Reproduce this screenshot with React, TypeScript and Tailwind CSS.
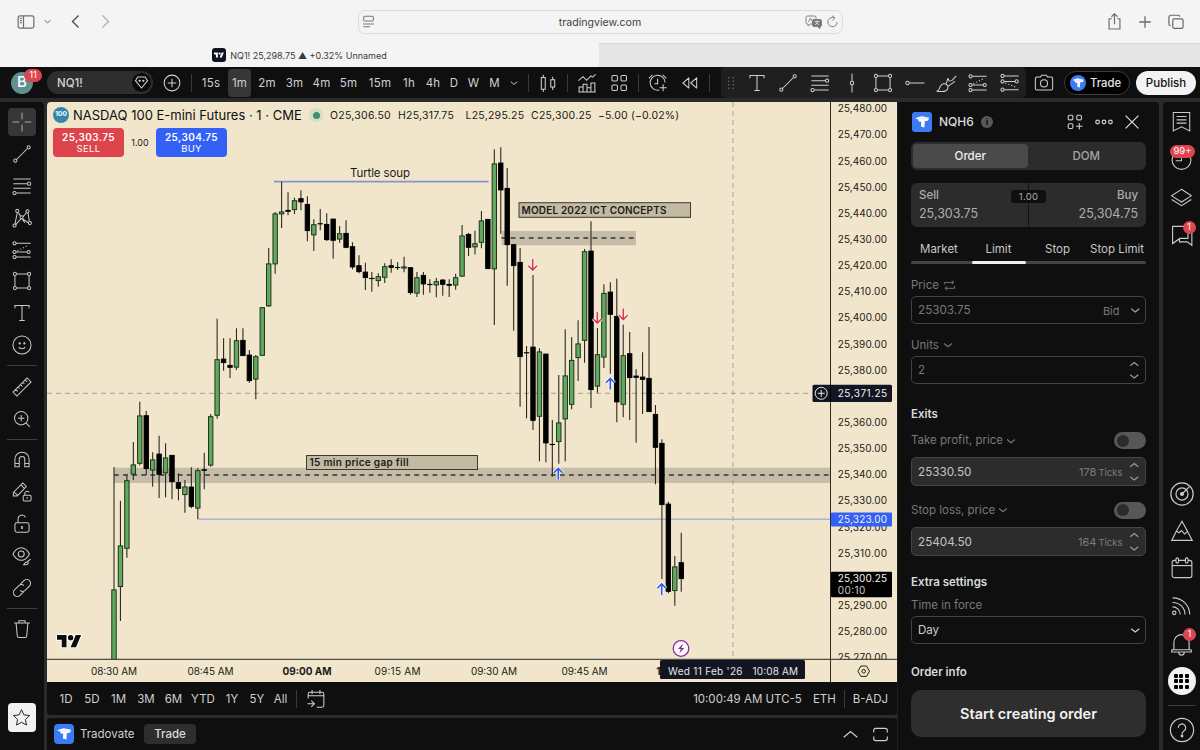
import type { ReactNode } from 'react';
import clsx from 'clsx';

interface IconProps {
  size?: number;
  sw?: number;
  className?: string;
  children: ReactNode;
}

// every glyph is drawn on a 28 unit grid
function Icon({ size = 22, sw = 1.3, className, children }: IconProps) {
  return (
    <svg
      width={size}
      height={size}
      viewBox="0 0 28 28"
      fill="none"
      stroke="currentColor"
      strokeWidth={sw}
      className={clsx('shrink-0', className)}
    >
      {children}
    </svg>
  );
}

const TrendLine = () => (
  <Icon>
    <circle cx="5.5" cy="22.5" r="2" />
    <circle cx="22.5" cy="5.5" r="2" />
    <path d="M7 21 21 7" />
  </Icon>
);

const FibLines = () => (
  <Icon>
    <path d="M3 5h22M3 11h17.5M3 17h22M7 23h18" />
    <circle cx="23" cy="11" r="2.1" />
    <circle cx="4.5" cy="23" r="2.1" />
  </Icon>
);

const RectShape = () => (
  <Icon>
    <path d="M7.5 5h13M7.5 23h13M5 7.5v13M23 7.5v13" />
    <circle cx="5" cy="5" r="2" />
    <circle cx="23" cy="5" r="2" />
    <circle cx="5" cy="23" r="2" />
    <circle cx="23" cy="23" r="2" />
  </Icon>
);

const LongPosition = () => (
  <Icon>
    <path d="M6.5 5.5H25M6.5 16.5H20.5M6.5 23H25" />
    <path d="M8 15 22 8" strokeDasharray="1.5 2.5" />
    <circle cx="4.5" cy="5.5" r="2" />
    <circle cx="4.5" cy="16.5" r="2" />
    <circle cx="22.5" cy="16.5" r="2" />
    <circle cx="4.5" cy="23" r="2" />
  </Icon>
);

const ShortPosition = () => (
  <Icon>
    <path d="M6.5 5H25M6.5 12H20.5M6.5 22.5H25" />
    <path d="M8 14 23 20" strokeDasharray="1.5 2.5" />
    <circle cx="4.5" cy="5" r="2" />
    <circle cx="4.5" cy="12" r="2" />
    <circle cx="22.5" cy="12" r="2" />
    <circle cx="4.5" cy="22.5" r="2" />
  </Icon>
);

const TextTool = () => (
  <Icon>
    <path d="M5 8V4.5h18V8M14 4.5V23.5M10.5 23.5h7" />
  </Icon>
);

const ZoomIn = () => (
  <Icon>
    <circle cx="13" cy="13" r="8.5" />
    <path d="M19 19l5 5M13 9v8M9 13h8" />
  </Icon>
);

const Chevron = ({ size = 14, className }: { size?: number; className?: string }) => (
  <Icon size={size} sw={2.6} className={className}>
    <path d="M5 10.5l9 7.5 9-7.5" />
  </Icon>
);

// text that sits a pixel below the centre line of its row
const Txt = ({ className, children }: { className?: string; children: ReactNode }) => (
  <span className={clsx('pt-[2px]', className)}>{children}</span>
);

const Tradovate = ({ className }: { className?: string }) => (
  <span className={clsx('flex items-center justify-center bg-[#3d7bf4] shrink-0', className)}>
    <svg viewBox="0 0 20 20" className="w-full h-full" fill="#fff">
      <path d="M3 6.2 9.5 4.2 17 5.8 16.2 8.6 12.8 9.2 12.4 15.6 9 14.6 9.2 9.8 6.8 9.6 6 7.6Z" />
      <path d="M6 7.6 10 6.2 12.8 9.2M10 6.2 16.6 7.2" stroke="#a9c6fb" strokeWidth=".4" fill="none" />
    </svg>
  </span>
);

function BrowserChrome() {
  return (
    <header className="h-[67px] bg-[#f4f4f4] text-[#4c4c4c] flex flex-col shrink-0">
      <div className="h-[43px] flex items-center">
        <div className="w-[358px] flex items-center pl-[16px]">
          <Icon size={20} sw={1.7} className="text-[#6e6e6e]">
            <rect x="3" y="5.5" width="22" height="17" rx="2.5" />
            <path d="M10.5 5.5v17M5.5 9h2.5M5.5 12h2.5M5.5 15h2.5" />
          </Icon>
          <Chevron size={9} className="ml-[7px]" />
          <Icon size={17} sw={2.2} className="ml-[15px]">
            <path d="M19 4 9 14l10 10" />
          </Icon>
          <Icon size={17} sw={2} className="ml-[13px] text-[#a8a8a8]">
            <path d="M9 4l10 10L9 24" />
          </Icon>
        </div>
        <div className="w-[485px] h-[24px] rounded-[7px] border border-[#dcdcdc] flex items-center justify-between pl-[2px] pr-[3px]">
          <div className="w-[60px] flex">
            <Icon size={15} sw={1.9} className="text-[#777]">
              <rect x="5" y="4" width="18" height="9" rx="2" />
              <path d="M4 18.5h20M4 24h13" />
            </Icon>
          </div>
          <Txt className="text-[10.6px] text-[#3f3f3f]">tradingview.com</Txt>
          <div className="w-[60px] flex items-center justify-end gap-[3px]">
            <svg width="18" height="14" viewBox="0 0 18 14" fill="none" stroke="#777" strokeWidth=".9">
              <path d="M2.5 1h7a1.5 1.5 0 0 1 1.5 1.5V4M7 9H5.5L3 11V9h-.5A1.5 1.5 0 0 1 1 7.500v-5A1.5 1.5 0 0 1 2.5 1" />
              <path d="M3.5 7 5.5 3 7 6" />
              <path d="M9 4.5h6a1.5 1.5 0 0 1 1.5 1.5v4a1.5 1.5 0 0 1-1.5 1.5v2l-2.5-2H9A1.5 1.5 0 0 1 7.500 10V6A1.5 1.5 0 0 1 9 4.5Z" fill="#777" />
              <path d="M9.5 6.5h5M12 5.5v1M10 10l3.5-3M14 10l-3.5-3" stroke="#f4f4f4" strokeWidth=".7" />
            </svg>
            <Icon size={13} sw={2} className="text-[#777]">
              <path d="M19 6.5A10 10 0 1 0 24 15M13 1.5l6 5-5 5.5" />
            </Icon>
          </div>
        </div>
        <div className="flex-1 flex items-center justify-end gap-[12px] pr-[15px] text-[#6a6a6a]">
          <Icon size={19} sw={1.7}>
            <path d="M10 10H6v15h16V10h-4M14 18V3M9.5 7 14 2.5 18.5 7" />
          </Icon>
          <Icon size={18} sw={2}>
            <path d="M14 5v18M5 14h18" />
          </Icon>
          <Icon size={18} sw={1.9} className="ml-px">
            <rect x="9" y="9" width="16" height="15" rx="2.5" />
            <path d="M5.5 19.5A2.5 2.5 0 0 1 3 17V6.5A3 3 0 0 1 6 3.5h11.5A2.5 2.5 0 0 1 20 6" />
          </Icon>
        </div>
      </div>
      <div className="h-[24px] flex">
        <div className="w-[599px] flex items-center justify-center gap-[4px]">
          <span className="w-[14px] h-[14px] rounded-[3px] bg-[#10131f] flex items-center justify-center">
            <svg width="10" height="6" viewBox="0 4 36 18" fill="#fff">
              <path d="M14 22H7V11H0V4h14zM28 22h-8l7.5-18h8z" />
              <circle cx="20" cy="8" r="4" />
            </svg>
          </span>
          <Txt className="text-[9px] text-[#3a3a3a] whitespace-nowrap">NQ1! 25,298.75 ▲ +0.32% Unnamed</Txt>
        </div>
        <div className="flex-1 bg-[#e6e6e6] border-t border-[#d6d6d6]" />
      </div>
    </header>
  );
}

const intervals = [
  { label: '15s', cls: 'w-[30px]' },
  { label: '1m', cls: 'w-[27px]', active: true },
  { label: '2m', cls: 'w-[28px]' },
  { label: '3m', cls: 'w-[27px]' },
  { label: '4m', cls: 'w-[27px]' },
  { label: '5m', cls: 'w-[27px]' },
  { label: '15m', cls: 'w-[36px]' },
  { label: '1h', cls: 'w-[22px]' },
  { label: '4h', cls: 'w-[26px]' },
  { label: 'D', cls: 'w-[16px]' },
  { label: 'W', cls: 'w-[23px]' },
  { label: 'M', cls: 'w-[19px]' },
];

function Slot({ className, children }: { className: string; children?: ReactNode }) {
  return <div className={clsx('h-full flex items-center justify-center shrink-0', className)}>{children}</div>;
}

const VSep = () => <span className="w-px h-[18px] bg-[#3a3a3a]" />;

function FavoriteTools() {
  const tools = [
    <TextTool />,
    <TrendLine />,
    <FibLines />,
    <Icon>
      <path d="M14 2v9.5M14 16v10" />
      <circle cx="14" cy="14" r="2.2" />
    </Icon>,
    <RectShape />,
    <Icon>
      <circle cx="4.5" cy="14" r="2.2" />
      <path d="M7 14h19" />
    </Icon>,
    <Icon>
      <path d="M2 24.5c3.500-.5 3.500-3.500 4.800-6.300 1.800-3.700 6-4.200 8.200-2s2 5.500-.5 7.300c-2.500 1.700-8.500 1.500-12.500 1zM14 15.500l2.500-7.500M17 18l8.500-6M16.500 8l1.500 3.500 3.500-.5 5.500-6" />
    </Icon>,
    <LongPosition />,
    <ShortPosition />,
  ];
  return (
    <div className="h-[31px] w-[305px] ml-[9px] bg-[#1f1f1f] rounded-[5px] flex shrink-0 text-[#d0d0d0]">
      <Slot className="w-[20px] text-[#6f6f6f]">
        <Icon size={16} sw={0}>
          {[5, 11, 17, 23].map((y) => (
            <g key={y} fill="currentColor">
              <circle cx="10" cy={y} r="1.3" />
              <circle cx="18" cy={y} r="1.3" />
            </g>
          ))}
        </Icon>
      </Slot>
      {tools.map((t, i) => (
        <Slot key={i} className="w-[31.6px]">
          {t}
        </Slot>
      ))}
    </div>
  );
}

function Toolbar() {
  return (
    <div className="h-[31px] bg-[#0f0f0f] flex items-center shrink-0 text-[#d1d1d1] text-[11.5px]">
      <div className="w-[47px] pl-[11px] relative">
        <span className="w-[22px] h-[22px] rounded-full bg-[#5f9191] text-white text-[15px] font-medium flex items-center justify-center">
          B
        </span>
        <span className="absolute left-[24px] -top-[3px] w-[18px] h-[13px] rounded-full bg-[#dd4550] text-white text-[9.5px] flex items-center justify-center">
          11
        </span>
      </div>
      <div className="w-[106px] h-[23px] rounded-full bg-[#2e2e2e] flex items-center justify-between pl-[10px] pr-[2px] font-medium">
        <Txt>NQ1!</Txt>
        <span className="w-[19px] h-[19px] rounded-full bg-[#0a0a0a] flex items-center justify-center">
          <Icon size={17} sw={1.7}>
            <path d="M8 5h12l4 6-10 12L4 11zM11 9.5V13M9 11h4M17 9.5V13M15 11h4" />
          </Icon>
        </span>
      </div>
      <Slot className="w-[38px]">
        <Icon size={20} sw={1.5}>
          <circle cx="14" cy="14" r="11" />
          <path d="M14 8v12M8 14h12" />
        </Icon>
      </Slot>
      <Slot className="w-[5px] justify-start">
        <VSep />
      </Slot>
      {intervals.map((it) => (
        <Slot key={it.label} className={it.cls}>
          <span
            className={clsx(
              'h-[28px] pt-[2px] flex items-center justify-center tracking-[0.2px]',
              it.active && 'w-[23px] bg-[#373737] rounded-[4px]',
            )}
          >
            {it.label}
          </span>
        </Slot>
      ))}
      <Slot className="w-[20px]">
        <Chevron size={10} />
      </Slot>
      <Slot className="w-[9px]">
        <VSep />
      </Slot>
      <Slot className="w-[29px]">
        <Icon>
          <path d="M5.5 7h5v15h-5zM8 3.5V7M8 22v3.5M17.5 10h5v9h-5zM20 6v4M20 19v4" />
        </Icon>
      </Slot>
      <Slot className="w-[10px]">
        <VSep />
      </Slot>
      <Slot className="w-[30px]">
        <Icon>
          <path d="M4 25v-6h5v6M9 19v-3.5h5V25M14 20h5v5M19 20v-6h5v11M3 25.5h22M3 11l6-5 4.5 4.5L19 5l2 1.5L25 3" />
        </Icon>
      </Slot>
      <Slot className="w-[33px]">
        <Icon>
          <rect x="5" y="4.5" width="7" height="7" rx="1.5" />
          <rect x="16.5" y="4.5" width="7" height="7" rx="1.5" />
          <rect x="5" y="16.5" width="7" height="7" rx="1.5" />
          <rect x="16.5" y="16.5" width="7" height="7" rx="1.5" />
        </Icon>
      </Slot>
      <Slot className="w-[6px]">
        <VSep />
      </Slot>
      <Slot className="w-[33px]">
        <Icon>
          <path d="M23 13.5a9.500 9.500 0 1 0-7.500 9.500M13.500 8.500V15H9.500M2.500 8 7 3.500M24.500 8 20 3.500M20.500 15.500v9M16 20h9" />
        </Icon>
      </Slot>
      <Slot className="w-[32px]">
        <Icon>
          <path d="M12.5 7.5v13L5 14zM22.5 7.5v13L15 14z" strokeLinejoin="round" />
        </Icon>
      </Slot>
      <Slot className="w-[6px]">
        <VSep />
      </Slot>
      <FavoriteTools />
      <Slot className="w-[36px]">
        <Icon>
          <path d="M9.500 6.500l1.500-2.500h6l1.500 2.500H23a2 2 0 0 1 2 2v12.500a2 2 0 0 1-2 2H5a2 2 0 0 1-2-2V8.500a2 2 0 0 1 2-2z" />
          <circle cx="14" cy="14.5" r="4.5" />
        </Icon>
      </Slot>
      <button className="ml-[2px] w-[66px] h-[24px] rounded-full border border-[#3b3b3b] bg-black flex items-center pl-[5px] gap-[4px] text-[11.3px] font-medium text-[#e4e4e4]">
        <Tradovate className="w-[16px] h-[16px] rounded-full" />
        <Txt>Trade</Txt>
      </button>
      <button className="ml-[6px] w-[60px] h-[24px] pt-[2px] rounded-full bg-[#f2f2f2] text-[#111] text-[11.5px] font-medium flex items-center justify-center">
        Publish
      </button>
    </div>
  );
}

function DrawingBar() {
  const groups = [
    [
      <span className="w-[28px] h-[28px] rounded-[4px] bg-[#373737] flex items-center justify-center">
        <Icon className="text-[#aaa]">
          <path d="M14 2v8.5M14 17.5V26M2 14h8.5M17.5 14H26" />
        </Icon>
      </span>,
      <TrendLine />,
      <FibLines />,
      <Icon>
        <path d="M5 22 8 7M9.5 7.5l8 12.5M6 22.5 20 7M21.5 7l2 12M13 14l9 6" />
        <circle cx="4.5" cy="23.5" r="2" fill="#0f0f0f" />
        <circle cx="8" cy="5" r="2" fill="#0f0f0f" />
        <circle cx="13.5" cy="13" r="2" fill="#0f0f0f" />
        <circle cx="21" cy="5.5" r="2" fill="#0f0f0f" />
        <circle cx="24" cy="20.5" r="2" fill="#0f0f0f" />
      </Icon>,
      <LongPosition />,
      <RectShape />,
      <TextTool />,
      <Icon>
        <circle cx="14" cy="14" r="11.5" />
        <path d="M10 16.5c1 3 7 3 8 0" />
        <circle cx="11" cy="12" r=".8" fill="currentColor" />
        <circle cx="17" cy="12" r=".8" fill="currentColor" />
      </Icon>,
    ],
    [
      <Icon>
        <path d="M2.5 20.5 20.5 2.5l5 5-18 18zM6 17l2.5 2.5M9 14l2 2M12 11l2.5 2.5M15 8l2 2M18 5l2.5 2.5" />
      </Icon>,
      <ZoomIn />,
    ],
    [
      <Icon>
        <path d="M5 22.5V13a9 9 0 0 1 18 0v9.5h-5.5V13a3.5 3.5 0 0 0-7 0v9.5zM5 18.5h5.5M17.5 18.5H23" />
      </Icon>,
      <Icon>
        <path d="M3 19v-4.5L15 2.5l4.5 4.5L8 19zM12.5 5l4.5 4.5M4 14l4 4" />
        <rect x="15.5" y="18" width="10" height="7.5" rx="1.5" />
        <path d="M17.5 18v-2a3 3 0 0 1 5.5-1.5M20.5 20.5v2" />
      </Icon>,
      <Icon>
        <rect x="5" y="12.5" width="18" height="12" rx="2.5" />
        <path d="M9 12.5V8a5 5 0 0 1 9.5-2.5" />
        <path d="M14 16.5v4" strokeWidth="2" />
      </Icon>,
      <Icon>
        <path d="M2.5 11.5C5 6.5 9 3.5 13 3.5s8 3 10.5 8c-2.5 5-6.5 8-10.5 8s-8-3-10.5-8z" />
        <circle cx="13" cy="11.5" r="3.8" />
        <path d="M15.5 25c2 .2 1.5-3 4.5-3.5s2.5 3.5-1 3.5zM21 21l4-3" />
      </Icon>,
      <Icon>
        <path d="M12 9l4.5-4.5a4.800 4.800 0 0 1 7 7L18 17a4.800 4.800 0 0 1-6.5 0M16 19l-4.5 4.5a4.800 4.800 0 0 1-7-7L10 11a4.800 4.800 0 0 1 6.5 0" />
      </Icon>,
    ],
    [
      <Icon>
        <path d="M4 6.5h20M10 6.5v-3h8v3M6.5 6.5 8 23a2 2 0 0 0 2 1.8h8a2 2 0 0 0 2-1.8l1.5-16.5" />
      </Icon>,
    ],
  ];

  return (
    <aside className="w-[43.5px] bg-[#0f0f0f] rounded-tr-[4px] pt-[4.6px] flex flex-col items-center shrink-0 text-[#c9c9c9]">
      {groups.map((g, i) => (
        <div key={i} className="flex flex-col items-center">
          {i > 0 && (
            <div className="h-[10px] flex items-center">
              <span className="w-[30px] h-px bg-[#3d3d3d]" />
            </div>
          )}
          {g.map((icon, j) => (
            <div key={j} className="h-[31.8px] flex items-center">
              {icon}
            </div>
          ))}
        </div>
      ))}
      <button className="mt-auto mb-[18px] w-[28px] h-[29px] rounded-[4px] bg-[#f2f2f2] text-[#222] flex items-center justify-center">
        <Icon size={21}>
          <path d="M14 3.5l3.2 7 7.6.9-5.6 5.2 1.5 7.5L14 20.4l-6.700 3.7 1.5-7.5L3.2 11.4l7.6-.9z" />
        </Icon>
      </button>
    </aside>
  );
}

// [high, body top, body bottom, low, bullish]
type Candle = [number, number, number, number, 0 | 1];

const candles: Candle[] = [
  [467, 589.5, 662, 662, 1],
  [500.7, 545.5, 587, 621, 1],
  [475, 480.3, 548.7, 557.7, 1],
  [442, 464.5, 474.5, 480, 1],
  [401.7, 415.5, 463.7, 465.3, 1],
  [411, 415.3, 469, 475, 0],
  [452.3, 459.5, 470.5, 486.7, 1],
  [435.7, 453.7, 474.7, 498, 0],
  [443.3, 457.5, 473.3, 497.3, 1],
  [455, 455, 482, 499.3, 0],
  [473.3, 482.3, 488.7, 500.3, 0],
  [480, 486.5, 495, 512.7, 1],
  [467.3, 486.7, 506.7, 508.3, 0],
  [468.3, 470.3, 508.5, 519, 1],
  [452.7, 469.3, 470.7, 489.3, 0],
  [414, 416.3, 465.5, 466.7, 1],
  [318.7, 359.3, 415.7, 418.7, 1],
  [338.3, 358.7, 363, 370.7, 0],
  [338.3, 365, 367.7, 378, 0],
  [328.3, 340.3, 367.5, 370, 1],
  [328.3, 340, 356, 356, 0],
  [350, 354.7, 381, 382.7, 0],
  [355, 356.3, 379.5, 399.3, 1],
  [307, 307.3, 355.7, 355.7, 1],
  [248, 263.5, 306.3, 307, 1],
  [212, 213.5, 264.3, 273.7, 1],
  [181.7, 211.5, 214.3, 228, 1],
  [192.3, 210, 211.7, 215.3, 0],
  [197.7, 200.3, 210, 214, 1],
  [190.3, 198.3, 202.3, 210.3, 0],
  [196.3, 204, 231, 241.3, 0],
  [219.3, 224.3, 235.3, 251, 1],
  [209, 223.3, 224, 230.3, 0],
  [213.3, 224, 240, 241, 0],
  [218.7, 218.7, 240.7, 258.7, 0],
  [226, 233.3, 239.5, 242.7, 1],
  [220.3, 233, 247.7, 248.3, 0],
  [242.3, 246.3, 267.3, 269.3, 0],
  [255.3, 265.3, 272, 273.3, 0],
  [262.7, 271.7, 278, 290, 0],
  [272, 278, 278.7, 291.7, 0],
  [273.3, 276.3, 281, 286.7, 1],
  [263.3, 266.3, 277.7, 283, 1],
  [259.3, 265.3, 267.7, 272.7, 0],
  [262, 267, 267.7, 270, 0],
  [256.7, 266.5, 268.5, 272.3, 1],
  [267.3, 267.3, 293, 294.7, 0],
  [272, 277.3, 293.5, 297, 1],
  [272, 275, 284.3, 294.7, 0],
  [279.3, 284, 284.7, 292.7, 0],
  [278, 281.3, 285.3, 297.3, 1],
  [279, 279.7, 284.7, 295.7, 0],
  [279.3, 284, 285.7, 297, 0],
  [273.7, 277.3, 285.5, 289.7, 1],
  [225, 235.5, 276.5, 277, 1],
  [233, 234, 247.7, 256, 0],
  [230.7, 243.3, 247.3, 254.5, 1],
  [211, 220.5, 242.7, 248.3, 1],
  [219, 219, 269, 269, 0],
  [149.3, 163.5, 269.3, 325, 1],
  [147.3, 162.7, 190.3, 233.7, 0],
  [168, 188, 245, 285.7, 0],
  [244.3, 244.3, 266, 330.7, 0],
  [248, 262, 357, 406.7, 0],
  [346, 352.3, 353, 418.3, 0],
  [275, 346.7, 420.7, 430, 0],
  [348.3, 351.5, 416.7, 461.3, 1],
  [353.7, 353.7, 443.3, 462.3, 0],
  [420, 444, 444.7, 476.7, 0],
  [375, 422.5, 442, 463.7, 1],
  [329.3, 375.5, 419.3, 461.3, 1],
  [337, 360, 404.7, 409.3, 1],
  [320.3, 343.5, 358, 381, 1],
  [249, 251.3, 340.7, 362.7, 1],
  [221.3, 250.7, 390, 408, 0],
  [328, 354.3, 386.5, 392.7, 1],
  [284.3, 293, 357.5, 368, 1],
  [282.3, 291.7, 314.7, 373.7, 0],
  [278.7, 316, 402.3, 422.3, 0],
  [324.7, 355.3, 404.7, 417.3, 1],
  [332, 353.3, 378, 420, 0],
  [369.3, 375.7, 377.7, 442.7, 0],
  [352.3, 376.7, 379.7, 414, 0],
  [327, 378, 412, 412, 0],
  [405, 414, 447.7, 484.3, 0],
  [439.3, 443, 505, 579, 0],
  [501.7, 503.7, 591.7, 593.3, 0],
  [556, 566.5, 591, 605.7, 1],
  [532.7, 562.3, 579, 591.7, 0],
];

const FIRST_X = 114;
const STEP = 6.446;

const priceToY = (p: number) => 108.3 + (25480 - p) * 2.615;

const prices = Array.from({ length: 22 }, (_, i) => 25480 - i * 10).filter((p) => p !== 25370 && p !== 25300);

const timeLabels: [string, number, boolean][] = [
  ['08:30 AM', 114, false],
  ['08:45 AM', 210.5, false],
  ['09:00 AM', 307, true],
  ['09:15 AM', 397.5, false],
  ['09:30 AM', 494, false],
  ['09:45 AM', 584.5, false],
];

function Arrow({ x, y, up }: { x: number; y: number; up?: boolean }) {
  const d = up ? 'M0 6V-5M-4.3-.7 0-5 4.3-.7' : 'M0-6V5M-4.3 .7 0 5 4.3 .7';
  return (
    <g transform={`translate(${x} ${y})`} fill="none">
      <path d={d} stroke="#fff" strokeWidth="3.4" opacity=".8" />
      <path d={d} stroke={up ? '#2f5be6' : '#d63a50'} strokeWidth="1.6" />
    </g>
  );
}

function PriceChart() {
  return (
    <svg width="850" height="580" viewBox="47 102 850 580" className="block" fontSize="10" fill="#1c1a17">
      <rect x="47" y="102" width="850" height="580" fill="#f1e6cc" />

      {/* zones */}
      <rect x="114" y="467.7" width="716" height="15.3" fill="#c6bda8" />
      <rect x="501.5" y="231" width="134.5" height="14.3" fill="#c6bda8" />
      <path d="M114 475h716M501.5 238h134" stroke="#38352e" strokeWidth="1.3" strokeDasharray="4.8 4.3" />
      <path d="M274 181.7h214.5" stroke="#8593d2" strokeWidth="1.8" />
      <path d="M197.5 519.3H830" stroke="#aeb1d8" strokeWidth="1.6" />

      {/* crosshair */}
      <path d="M47 393.3h766M733 102v557" stroke="#a8a190" strokeDasharray="5 4" />

      {candles.map(([high, top, bottom, low, bull], i) => {
        const x = FIRST_X + i * STEP;
        return (
          <g key={i}>
            <path d={`M${x} ${high}V${low}`} stroke="#2d2922" strokeWidth="1.1" />
            <rect
              x={x - 2.2}
              y={top + 0.4}
              width="4.4"
              height={Math.max(bottom - top - 0.8, 0.2)}
              fill={bull ? '#63a85f' : '#000'}
              stroke={bull ? '#173015' : '#000'}
              strokeWidth=".95"
            />
          </g>
        );
      })}

      <rect x="519" y="202.7" width="171.5" height="14.6" fill="#c3baa4" stroke="#3d3a32" />
      <text x="521.5" y="213.8" fontWeight="600" textLength="145">
        MODEL 2022 ICT CONCEPTS
      </text>
      <rect x="306.5" y="455.5" width="171" height="14" fill="#c3baa4" stroke="#3d3a32" />
      <text x="309.5" y="466.4" fontWeight="600" textLength="99">
        15 min price gap fill
      </text>
      <text x="350" y="177" fontSize="11.5" textLength="60">
        Turtle soup
      </text>

      <Arrow x={532.7} y={265} />
      <Arrow x={597.3} y={318} />
      <Arrow x={623.3} y={314.5} />
      <Arrow x={558.3} y={473.5} up />
      <Arrow x={610.3} y={383.5} up />
      <Arrow x={661.7} y={589} up />

      <g transform="translate(57 632.2) scale(.68)" stroke="#fff" strokeWidth="3" paintOrder="stroke" fill="#0c0c0c">
        <path d="M14 22H7V11H0V4h14zM28 22h-8l7.5-18h8z" />
        <circle cx="20" cy="8" r="4" />
      </g>

      <circle cx="681" cy="648.5" r="7.8" fill="#fff" stroke="#8b2f9e" strokeWidth="1.3" />
      <path d="M683 643.5l-5 5.5h2.8l-1.6 4.5 5-5.5h-2.8z" fill="#8b2f9e" />

      {/* price axis */}
      {prices.map((p) => (
        <text key={p} x="837.8" y={priceToY(p) + 3.9} textLength="49.3">
          {p.toLocaleString('en-US')}.00
        </text>
      ))}
      <rect x="47" y="659.5" width="850" height="22.5" fill="#f1e6cc" />
      <path d="M47 659.3h850M830.5 102v580" stroke="#2c2a25" />
      {timeLabels.map(([label, x, bold]) => (
        <text key={label} x={x} y="675" textAnchor="middle" fontWeight={bold ? 700 : 400} textLength={bold ? 49 : 46}>
          {label}
        </text>
      ))}
      {/* the rest of this label is under the cursor time tag */}
      <text x="656.2" y="675" fontWeight="700">
        1
      </text>

      <rect x="812.5" y="384.7" width="79.5" height="17.3" rx="1.5" fill="#131622" />
      <path d="M830.5 385v17" stroke="#000" />
      <g stroke="#e8e8e8" fill="none">
        <circle cx="821.2" cy="393.3" r="6" />
        <path d="M821.2 389.8v7M817.7 393.3h7" />
      </g>
      <rect x="831" y="512.6" width="61" height="13.8" rx="1" fill="#3461f5" />
      <rect x="831" y="571.8" width="61" height="25.4" rx="1" fill="#000" />
      <g fill="#f0f0f0">
        <text x="837.8" y="396.8" textLength="49.3">
          25,371.25
        </text>
        <text x="837.8" y="523" textLength="49.3">
          25,323.00
        </text>
        <text x="837.8" y="582" textLength="49.3">
          25,300.25
        </text>
        <text x="837.8" y="593.6" textLength="27.5" fill="#c8c8c8">
          00:10
        </text>
      </g>

      <rect x="660" y="660" width="145" height="19" rx="1.5" fill="#131622" />
      <text x="668" y="674.8" textLength="74.5" fill="#e6e6e6">
        Wed 11 Feb '26
      </text>
      <text x="752.5" y="674.8" textLength="45.5" fill="#e6e6e6">
        10:08 AM
      </text>

      <g stroke="#26241f" fill="none">
        <path d="M860.9 666h5.6l3 5.2-3 5.2h-5.6l-3-5.2z" strokeLinejoin="round" />
        <circle cx="863.7" cy="671.2" r="1.8" />
      </g>
    </svg>
  );
}

function Legend() {
  return (
    <div className="absolute left-[6px] top-[5px] text-[#1c1a17]">
      <div className="h-[16px] flex items-center whitespace-nowrap">
        <span className="w-[16px] h-[16px] rounded-full bg-[#3586ad] text-white text-[6.5px] font-bold flex items-center justify-center">
          100
        </span>
        <Txt className="ml-[4px] w-[230px] text-[13px] text-[#0f0f0f]">NASDAQ 100 E-mini Futures · 1 · CME</Txt>
        <span className="ml-[6px] w-[14px] h-[14px] rounded-full bg-[#d5dfc6] flex items-center justify-center">
          <span className="w-[7px] h-[7px] rounded-full bg-[#3e8f73]" />
        </span>
        <div className="ml-[7px] pt-[2px] flex text-[10.5px] tracking-[0.25px]">
          <span className="w-[68px]">O25,306.50</span>
          <span className="w-[67.5px]">H25,317.75</span>
          <span className="w-[65.5px]">L25,295.25</span>
          <span className="w-[67px]">C25,300.25</span>
          <span className="tracking-[0.15px]">−5.00 (−0.02%)</span>
        </div>
      </div>
      <div className="mt-[5px] flex items-center">
        <div className="w-[71px] h-[29px] rounded-[4px] bg-[#dd444c] text-white text-center flex flex-col justify-center text-[10px] leading-[12px]">
          <b className="font-semibold tracking-[0.4px]">25,303.75</b>
          <span className="text-[9.5px] tracking-[0.4px]">SELL</span>
        </div>
        <span className="w-[32px] pt-px text-center text-[9px]">1.00</span>
        <div className="w-[71px] h-[29px] rounded-[4px] bg-[#3461f5] text-white text-center flex flex-col justify-center text-[10px] leading-[12px]">
          <b className="font-semibold tracking-[0.4px]">25,304.75</b>
          <span className="text-[9.5px] tracking-[0.2px]">BUY</span>
        </div>
      </div>
    </div>
  );
}

const ranges = [
  ['1D', 'w-[26px]'],
  ['5D', 'w-[26px]'],
  ['1M', 'w-[27px]'],
  ['3M', 'w-[28px]'],
  ['6M', 'w-[27px]'],
  ['YTD', 'w-[32px]'],
  ['1Y', 'w-[26px]'],
  ['5Y', 'w-[24px]'],
  ['All', 'w-[23px]'],
];

function ChartColumn() {
  return (
    <main className="w-[850px] ml-[3.5px] flex flex-col shrink-0">
      <div className="relative h-[580px] rounded-tl-[4px] overflow-hidden">
        <PriceChart />
        <Legend />
      </div>
      <div className="h-[33px] bg-[#0f0f0f] flex items-center text-[11.5px] text-[#cfcfcf] pl-[6px] pr-[9px] rounded-b-[3px]">
        {ranges.map(([label, w]) => (
          <Txt key={label} className={clsx('text-center', w)}>
            {label}
          </Txt>
        ))}
        <Slot className="w-[9px]">
          <VSep />
        </Slot>
        <Slot className="w-[30px]">
          <Icon>
            <path d="M4 13.5V8a2.5 2.5 0 0 1 2.5-2.5h15A2.5 2.5 0 0 1 24 8v14a2.5 2.5 0 0 1-2.5 2.5H15M4 10h20M9 2.5v5.5M19 2.5v5.5M3 20h8.5M8 16l4 4-4 4" />
          </Icon>
        </Slot>
        <Txt className="ml-auto">10:00:49 AM UTC-5</Txt>
        <Txt className="ml-[11px]">ETH</Txt>
        <span className="w-[17px] flex justify-center">
          <VSep />
        </span>
        <Txt>B-ADJ</Txt>
      </div>
      <div className="mt-[3px] h-[32px] bg-[#0f0f0f] rounded-t-[3px] flex items-center pl-[7px] pr-[7px] text-[11.5px] text-[#cfcfcf]">
        <Tradovate className="w-[20px] h-[20px] rounded-[4px]" />
        <Txt className="ml-[6px] w-[54px]">Tradovate</Txt>
        <span className="ml-[10px] w-[52px] h-[20px] pt-px rounded-[4px] bg-[#2e2e2e] font-medium text-[#dcdcdc] flex items-center justify-center">
          Trade
        </span>
        <Icon size={19} sw={1.7} className="ml-auto">
          <path d="M4 18l10-8.5L24 18" />
        </Icon>
        <Icon size={19} sw={1.7} className="ml-[11px]">
          <path d="M4 11V8a3 3 0 0 1 3-3h14a3 3 0 0 1 3 3v3M4 17v3a3 3 0 0 0 3 3h14a3 3 0 0 0 3-3v-3" />
        </Icon>
      </div>
    </main>
  );
}

const Stepper = () => (
  <span className="flex flex-col items-center text-[#9a9a9a]">
    <Chevron size={12.5} className="rotate-180" />
    <Chevron size={12.5} />
  </span>
);

const Toggle = () => (
  <span className="w-[32px] h-[17px] rounded-full bg-[#575757] flex items-center pl-[2.5px]">
    <span className="w-[12px] h-[12px] rounded-full bg-[#2b2b2b]" />
  </span>
);

function TickField({ value, ticks }: { value: string; ticks: string }) {
  return (
    <div className="h-[29px] rounded-[5px] border border-[#454545] bg-[#2c2c2c] flex items-center pl-[6px] pr-[5px] text-[11.7px] text-[#c4c4c4]">
      <Txt>{value}</Txt>
      <Txt className="ml-auto mr-[5px] text-[#7d7d7d] text-[11px]">
        {ticks} <span className="text-[9.5px] -ml-[1px]">Ticks</span>
      </Txt>
      <Stepper />
    </div>
  );
}

function OrderPanel() {
  return (
    <section className="w-[262px] bg-[#0f0f0f] border-l border-[#1d1d1d] rounded-tr-[4px] pl-[13px] pr-[13px] text-[11.5px] text-[#d1d1d1] shrink-0">
      <div className="h-[40px] flex items-center">
        <Tradovate className="w-[20px] h-[20px] rounded-[3px] ml-[1px]" />
        <span className="ml-[7px] w-[42px] text-[12px] font-medium text-[#dcdcdc]">NQH6</span>
        <span className="w-[12px] h-[12px] rounded-full bg-[#585858] text-[#0f0f0f] text-[9px] font-bold flex items-center justify-center">
          i
        </span>
        <Icon size={20} sw={1.5} className="ml-auto">
          <rect x="4.5" y="4.5" width="6.5" height="6.5" rx="1.5" />
          <rect x="16.5" y="4.5" width="6.5" height="6.5" rx="1.5" />
          <rect x="4.5" y="16.5" width="6.5" height="6.5" rx="1.5" />
          <path d="M20 15.5v9M15.5 20h9" />
        </Icon>
        <Icon size={20} sw={1.7} className="ml-[9px]">
          <circle cx="5" cy="14" r="2.5" />
          <circle cx="14" cy="14" r="2.5" />
          <circle cx="23" cy="14" r="2.5" />
        </Icon>
        <Icon size={20} sw={1.7} className="ml-[8px] mr-[4px] text-[#e0e0e0]">
          <path d="M5 5l18 18M23 5 5 23" />
        </Icon>
      </div>

      <div className="h-[28px] rounded-[6px] bg-[#2c2c2c] p-[2px] grid grid-cols-2 text-center font-medium leading-[24px]">
        <span className="rounded-[4px] bg-[#4a4a4a] text-[#f0f0f0] mr-[1px]">Order</span>
        <span className="text-[#a5a5a5]">DOM</span>
      </div>

      <div className="relative mt-[13px] h-[44px] rounded-[6px] bg-[#2c2c2c] grid grid-cols-2 text-[#adadad]">
        <div className="pl-[8px] pt-[3px] border-r border-[#111]">
          <p className="leading-[18px] font-medium">Sell</p>
          <p className="leading-[20px] text-[12.5px]">25,303.75</p>
        </div>
        <div className="pr-[8px] pt-[3px] text-right">
          <p className="leading-[18px] font-medium">Buy</p>
          <p className="leading-[20px] text-[12.5px]">25,304.75</p>
        </div>
        <span className="absolute left-[100px] top-[7px] w-[35px] h-[13px] rounded-[3px] bg-[#0f0f0f] text-[9.5px] leading-[13px] tracking-[0.3px] text-center">
          1.00
        </span>
      </div>

      <div className="h-[34px] pt-[11px] pl-[9px] pr-[1px] flex items-center text-[#c8c8c8] whitespace-nowrap">
        <span className="w-[65.5px]">Market</span>
        <span className="w-[59.5px]">Limit</span>
        <span className="w-[45px]">Stop</span>
        <span>Stop Limit</span>
      </div>
      <div className="h-[3px] rounded-full bg-[#454545]">
        <div className="ml-[61px] w-[54px] h-[3px] rounded-full bg-[#f0f0f0]" />
      </div>

      <div className="h-[32px] pt-[10px] flex items-center gap-[4px] text-[#787878]">
        <Txt>Price</Txt>
        <Icon size={13} sw={2}>
          <path d="M3 12V7.500h20M19 3.5 23.5 7.500 19 11.5M25 15v5H5M9 15.5 4.500 20 9 24.5" />
        </Icon>
      </div>
      <div className="h-[28px] rounded-[5px] border border-[#434343] flex items-center pl-[6px] pr-[4px] text-[#787878] text-[11.7px]">
        <Txt>25303.75</Txt>
        <Txt className="ml-auto mr-[9px] text-[11px]">Bid</Txt>
        <Chevron size={12.5} className="text-[#a5a5a5]" />
      </div>

      <div className="h-[32px] pt-[10px] flex items-center gap-[3px] text-[#787878]">
        <Txt>Units</Txt>
        <Chevron size={12} />
      </div>
      <div className="h-[28px] rounded-[5px] border border-[#434343] flex items-center justify-between pl-[6px] pr-[5px] text-[#787878]">
        <Txt>2</Txt>
        <Stepper />
      </div>

      <h3 className="h-[40px] pt-[18px] leading-[24px] font-semibold text-[#dadada]">Exits</h3>
      <div className="h-[33px] flex items-center gap-[2px] text-[#787878]">
        <span>Take profit, price</span>
        <Chevron size={12} />
        <span className="ml-auto">
          <Toggle />
        </span>
      </div>
      <TickField value="25330.50" ticks="178" />
      <div className="h-[41px] pt-[7px] flex items-center gap-[2px] text-[#787878]">
        <Txt>Stop loss, price</Txt>
        <Chevron size={12} />
        <span className="ml-auto">
          <Toggle />
        </span>
      </div>
      <TickField value="25404.50" ticks="164" />

      <h3 className="h-[38px] pt-[14px] leading-[24px] font-semibold text-[#dadada]">Extra settings</h3>
      <p className="h-[22px] leading-[22px] text-[#787878]">Time in force</p>
      <div className="h-[28px] rounded-[5px] border border-[#434343] flex items-center justify-between pl-[6px] pr-[4px]">
        <Txt>Day</Txt>
        <Chevron size={12.5} />
      </div>

      <h3 className="h-[46px] pt-[10px] leading-[36px] font-semibold text-[#dadada]">Order info</h3>
      <button className="w-full h-[47px] rounded-[10px] bg-[#2e2e2e] text-[14.5px] font-semibold text-[#f2f2f2]">
        Start creating order
      </button>
    </section>
  );
}

function Badge({ className, children }: { className: string; children: ReactNode }) {
  return (
    <span
      className={clsx(
        'absolute h-[13px] rounded-full bg-[#dd4550] text-white text-[9.5px] flex items-center justify-center',
        className,
      )}
    >
      {children}
    </span>
  );
}

function WidgetBar() {
  return (
    <aside className="flex-1 ml-[4px] bg-[#0f0f0f] rounded-tl-[4px] flex flex-col items-center justify-between text-[#c9c9c9]">
      <div className="flex flex-col items-center">
        <div className="h-[38px] flex items-center">
          <Icon size={23}>
            <path d="M4 3h20v22.5l-10-5-10 5zM8 8h12M8 12h12M8 16h12" />
          </Icon>
        </div>
        <div className="h-[38px] flex items-center relative">
          <Icon size={23}>
            <circle cx="14" cy="14.5" r="11.5" />
            <path d="M14 7v8.5H7" />
          </Icon>
          <Badge className="left-0 top-[5px] w-[25px]">99+</Badge>
        </div>
        <div className="h-[38px] flex items-center">
          <Icon size={23}>
            <path d="M14 4 26 12 14 19.5 2 12zM2 16.5l12 7.5 12-7.5" />
          </Icon>
        </div>
        <div className="h-[38px] flex items-center relative">
          <Icon size={24}>
            <path d="M3 4h18v14h-9.5L3 24zM21 9.5h4.5V26L20 22h-9v-4" />
          </Icon>
          <Badge className="left-[13px] top-[5px] w-[13px]">1</Badge>
        </div>
      </div>
      <div className="flex flex-col items-center">
        <div className="h-[37.5px] flex items-center">
          <Icon size={26}>
            <circle cx="14" cy="14" r="12" />
            <circle cx="14" cy="14" r="6.5" />
            <path d="M14 14l8-8" />
            <circle cx="14" cy="14" r="1.5" fill="currentColor" />
          </Icon>
        </div>
        <div className="h-[37.5px] flex items-center">
          <Icon size={24}>
            <path d="M14 2.5 20.500 14.500 17 17.500 13.500 13.500 10.500 16 7.500 14zM7.500 14 2 25h24l-5.500-10.5" />
          </Icon>
        </div>
        <div className="h-[37.5px] flex items-center">
          <Icon size={24}>
            <rect x="2.5" y="4" width="23" height="20" rx="2.5" />
            <path d="M2.5 10h23" />
            <rect x="7" y="1" width="3" height="6" rx="1.5" fill="#0f0f0f" />
            <rect x="18" y="1" width="3" height="6" rx="1.5" fill="#0f0f0f" />
          </Icon>
        </div>
        <div className="h-[37.5px] flex items-center">
          <Icon size={24}>
            <circle cx="5" cy="22" r="2" />
            <path d="M3 15a9 9 0 0 1 9 9M3 10a14 14 0 0 1 14.5 14M3 4.500a19.5 19.5 0 0 1 20 19.5" />
          </Icon>
        </div>
        <div className="h-[37.5px] flex items-center relative">
          <Icon size={25}>
            <path d="M3 21h22M5.5 21V12.5a8.5 8.5 0 0 1 17 0V21M3 21v2.500h22V21M11 24a3 3 0 0 0 6 0" />
          </Icon>
          <Badge className="left-[14px] top-[3px] w-[13px]">1</Badge>
        </div>
        <div className="h-[37.5px] flex items-center">
          <span className="w-[28px] h-[28px] rounded-full bg-[#f2f2f2] grid grid-cols-3 place-items-center p-[6px]">
            {Array.from({ length: 9 }, (_, i) => (
              <span key={i} className="w-[4px] h-[4px] rounded-[1px] bg-black" />
            ))}
          </span>
        </div>
        <div className="h-[10px] flex items-center">
          <span className="w-[28px] h-px bg-[#3d3d3d]" />
        </div>
        <div className="h-[40px] flex items-center">
          <Icon size={26}>
            <circle cx="14" cy="14" r="12.5" />
            <path d="M10 11.5a4 4 0 1 1 6 3.5c-1.5 1-2 1.5-2 3.5" />
            <circle cx="14" cy="20.5" r=".9" fill="currentColor" />
          </Icon>
        </div>
      </div>
    </aside>
  );
}

export default function App() {
  return (
    <div className="w-[1200px] h-[750px] overflow-hidden flex flex-col bg-[#2b2b2b] font-[Inter,sans-serif] leading-normal">
      <BrowserChrome />
      <Toolbar />
      <div className="mt-[4px] flex-1 flex min-h-0">
        <DrawingBar />
        <ChartColumn />
        <OrderPanel />
        <WidgetBar />
      </div>
    </div>
  );
}
